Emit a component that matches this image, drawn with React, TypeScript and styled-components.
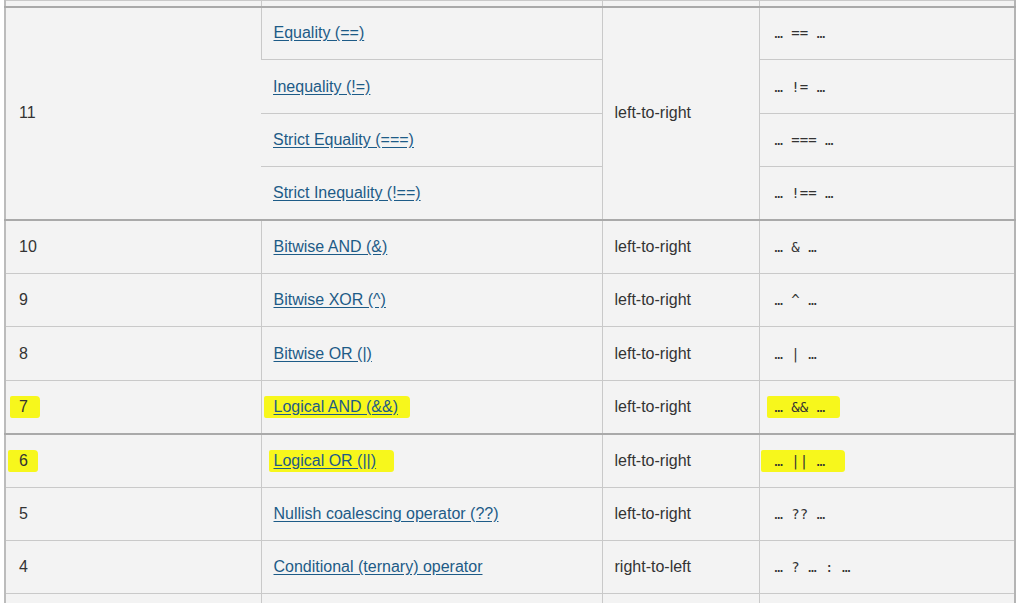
import React from 'react'
import styled, { createGlobalStyle } from 'styled-components'

const GlobalStyle = createGlobalStyle`
  html, body {
    margin: 0;
    padding: 0;
    background: #ffffff;
    overflow: hidden;
    font-family: "Liberation Sans", Arial, sans-serif;
  }
`

interface IOp {
  name: string
  code: string
  mark?: [number, number]
  codeMark?: [number, number]
}

interface IGroup {
  prec: string
  assoc: string
  ops: IOp[]
  thick?: boolean
  precMark?: [number, number]
}

const groups: IGroup[] = [
  {
    prec: '11',
    assoc: 'left-to-right',
    thick: true,
    ops: [
      { name: 'Equality (==)', code: '… == …' },
      { name: 'Inequality (!=)', code: '… != …' },
      { name: 'Strict Equality (===)', code: '… === …' },
      { name: 'Strict Inequality (!==)', code: '… !== …' },
    ],
  },
  { prec: '10', assoc: 'left-to-right', thick: true, ops: [{ name: 'Bitwise AND (&)', code: '… & …' }] },
  { prec: '9', assoc: 'left-to-right', ops: [{ name: 'Bitwise XOR (^)', code: '… ^ …' }] },
  { prec: '8', assoc: 'left-to-right', ops: [{ name: 'Bitwise OR (|)', code: '… | …' }] },
  {
    prec: '7',
    assoc: 'left-to-right',
    precMark: [9, 12],
    ops: [{ name: 'Logical AND (&&)', code: '… && …', mark: [10, 12], codeMark: [8, 15] }],
  },
  {
    prec: '6',
    assoc: 'left-to-right',
    thick: true,
    precMark: [11, 10],
    ops: [{ name: 'Logical OR (||)', code: '… || …', mark: [5, 18], codeMark: [14, 20] }],
  },
  { prec: '5', assoc: 'left-to-right', ops: [{ name: 'Nullish coalescing operator (??)', code: '… ?? …' }] },
  { prec: '4', assoc: 'right-to-left', ops: [{ name: 'Conditional (ternary) operator', code: '… ? … : …' }] },
]

function Highlight({ mark, children }: { mark?: [number, number]; children: React.ReactNode }) {
  if (!mark) return <>{children}</>
  return (
    <Marker $l={mark[0]} $r={mark[1]}>
      {children}
    </Marker>
  )
}

// rows cut off by the top and bottom edge of the window
function EdgeRow({ height }: { height: number }) {
  return (
    <tr style={{ height }}>
      <Cell />
      <Cell />
      <Cell />
      <Cell />
    </tr>
  )
}

function App() {
  return (
    <>
      <GlobalStyle />
      <Frame>
        <Table>
          <colgroup>
            <col style={{ width: 256 }} />
            <col style={{ width: 341 }} />
            <col style={{ width: 157 }} />
            <col style={{ width: 256 }} />
          </colgroup>
          <tbody>
            <EdgeRow height={6} />
            {groups.map((g) =>
              g.ops.map((op, i) => (
                <Row key={g.prec + op.name}>
                  {i === 0 && (
                    <Cell rowSpan={g.ops.length} $thick={g.thick} $noRight={g.ops.length > 1} $pad={13}>
                      <Highlight mark={g.precMark}>{g.prec}</Highlight>
                    </Cell>
                  )}
                  <Cell $thick={i === 0 && g.thick} $noLeft={i > 0}>
                    <Highlight mark={op.mark}>
                      <OpLink href="#">{op.name}</OpLink>
                    </Highlight>
                  </Cell>
                  {i === 0 && (
                    <Cell rowSpan={g.ops.length} $thick={g.thick}>
                      {g.assoc}
                    </Cell>
                  )}
                  <Cell $thick={i === 0 && g.thick} $pad={15}>
                    <Highlight mark={op.codeMark}>
                      <Code>{op.code}</Code>
                    </Highlight>
                  </Cell>
                </Row>
              ))
            )}
            <EdgeRow height={40} />
          </tbody>
        </Table>
      </Frame>
    </>
  )
}

const Frame = styled.div`
  padding-left: 4px;
  height: 603px;
  overflow: hidden;
`

const Table = styled.table`
  border-collapse: collapse;
  table-layout: fixed;
  width: 1010px;
  background: #f3f3f3;
  border-left: 2px solid #bcbcbc;
  border-right: 2px solid #b4b4b4;
  color: #333333;
  font-size: 16px;
  line-height: 18px;
`

const Row = styled.tr`
  height: 53.4px;
`

const Cell = styled.td<{ $thick?: boolean; $noLeft?: boolean; $noRight?: boolean; $pad?: number }>`
  padding: 0 12px 0 ${({ $pad }) => $pad ?? 12}px;
  vertical-align: middle;
  border: 1px solid #c9c9c9;
  border-top: ${({ $thick }) => ($thick ? '2px solid #a9a9a9' : '1px solid #c9c9c9')};
  ${({ $noLeft }) => ($noLeft ? 'border-left: none;' : '')}
  ${({ $noRight }) => ($noRight ? 'border-right: none;' : '')}
  white-space: nowrap;
  overflow: hidden;
`

const OpLink = styled.a`
  color: #1d5b87;
  text-decoration: underline;
  text-underline-offset: 2px;
`

const Code = styled.code`
  font-family: "DejaVu Sans Mono", "Liberation Mono", monospace;
  font-size: 14px;
  color: #333333;
  white-space: pre;
`

const Marker = styled.span<{ $l: number; $r: number }>`
  display: inline-block;
  background: #f7f71c;
  padding: 2px ${({ $r }) => $r}px 2px ${({ $l }) => $l}px;
  margin-left: ${({ $l }) => -$l}px;
  border-radius: 2px 4px 3px 2px;
`

export default App
